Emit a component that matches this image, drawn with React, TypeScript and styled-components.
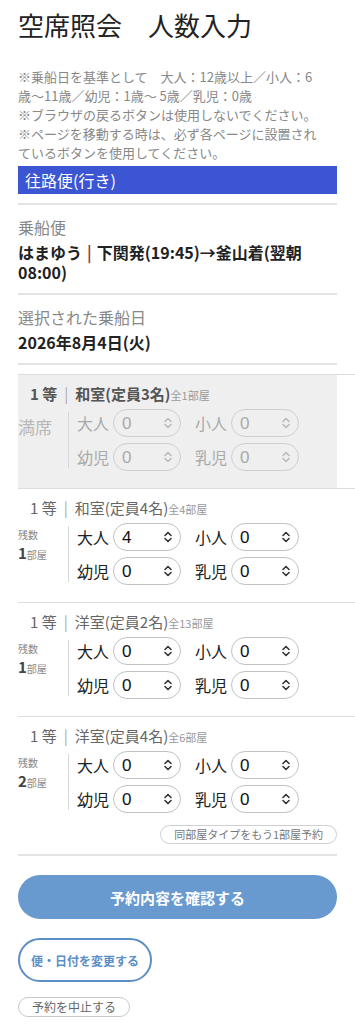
import React from "react";
import styled, { createGlobalStyle } from "styled-components";

const GlobalStyle = createGlobalStyle`
  body {
    margin: 0;
    background: #fff;
    color: #222;
    font-family: "Noto Sans CJK JP", "Liberation Sans", sans-serif;
  }
  * { box-sizing: border-box; }
`;

type RoomType = {
  name: string;
  total: string;
  rest?: number;
  full?: boolean;
  values: number[];
  addButton?: boolean;
};

const rooms: RoomType[] = [
  { name: "和室(定員3名)", total: "全1部屋", full: true, values: [0, 0, 0, 0] },
  { name: "和室(定員4名)", total: "全4部屋", rest: 1, values: [4, 0, 0, 0] },
  { name: "洋室(定員2名)", total: "全13部屋", rest: 1, values: [0, 0, 0, 0] },
  { name: "洋室(定員4名)", total: "全6部屋", rest: 2, values: [0, 0, 0, 0], addButton: true },
];

const fieldNames = ["大人", "小人", "幼児", "乳児"];

export default function App() {
  return (
    <>
      <GlobalStyle />
      <Page>
        <Title>空席照会　人数入力</Title>
        <Notes>
          <NoteLine>※乗船日を基準として　大人：12歳以上／小人：6</NoteLine>
          <NoteLine>歳〜11歳／幼児：1歳〜 5歳／乳児：0歳</NoteLine>
          <NoteLine>※ブラウザの戻るボタンは使用しないでください。</NoteLine>
          <NoteLine>※ページを移動する時は、必ず各ページに設置され</NoteLine>
          <NoteLine>ているボタンを使用してください。</NoteLine>
        </Notes>
        <RouteBar>往路便(行き)</RouteBar>
        <Divider />
        <InfoSection>
          <InfoLabel>乗船便</InfoLabel>
          <InfoValue>
            はまゆう<Pipe>|</Pipe>下関発(19:45)→釜山着(翌朝 08:00)
          </InfoValue>
        </InfoSection>
        <Divider />
        <InfoSection>
          <InfoLabel>選択された乗船日</InfoLabel>
          <InfoValue>2026年8月4日(火)</InfoValue>
        </InfoSection>
        <Divider />

        <RoomList>
          {rooms.map((room, i) => (
            <RoomCard key={i}>
              <CardBody $full={room.full}>
                <RoomHeader $full={room.full}>
                  1 等<HeaderSep>|</HeaderSep>
                  {room.name}
                  <TotalText>{room.total}</TotalText>
                </RoomHeader>
                <RoomMain>
                  <StockCol>
                    {room.full ? (
                      <FullText>満席</FullText>
                    ) : (
                      <>
                        <StockSmall>残数</StockSmall>
                        <StockLine>
                          <StockNum>{room.rest}</StockNum>
                          <StockSmall>部屋</StockSmall>
                        </StockLine>
                      </>
                    )}
                  </StockCol>
                  <FieldGrid>
                    {fieldNames.map((f, j) => (
                      <Field key={f}>
                        <FieldLabel $disabled={room.full}>{f}</FieldLabel>
                        <SelectWrap>
                          <CountSelect
                            $disabled={room.full}
                            disabled={room.full}
                            defaultValue={room.values[j]}
                          >
                            {[0, 1, 2, 3, 4].map((n) => (
                              <option key={n} value={n}>
                                {n}
                              </option>
                            ))}
                          </CountSelect>
                          <Chevron $disabled={room.full} width="8" height="12" viewBox="0 0 8 12">
                            <path d="M1 4.5 L4 1.5 L7 4.5 M1 7.5 L4 10.5 L7 7.5" />
                          </Chevron>
                        </SelectWrap>
                      </Field>
                    ))}
                  </FieldGrid>
                </RoomMain>
                {room.addButton && (
                  <AddRow>
                    <AddButton>同部屋タイプをもう1部屋予約</AddButton>
                  </AddRow>
                )}
              </CardBody>
            </RoomCard>
          ))}
        </RoomList>
        <Divider $gap={0} />

        <ConfirmButton>予約内容を確認する</ConfirmButton>
        <ChangeButton>便・日付を変更する</ChangeButton>
        <CancelButton>予約を中止する</CancelButton>
      </Page>
    </>
  );
}

const Page = styled.div`
  padding: 0 18px 20px;
  width: 355px;
  overflow: hidden;
`;

const Title = styled.h1`
  margin: 9px 0 0;
  font-size: 26px;
  line-height: 31px;
  font-weight: normal;
  color: #222;
`;

const Notes = styled.div`
  margin-top: 27px;
  font-size: 13px;
  line-height: 19px;
  color: #888;
`;

const NoteLine = styled.div`
  white-space: nowrap;
`;

const RouteBar = styled.div`
  margin-top: 4px;
  height: 28px;
  line-height: 28px;
  padding-left: 7px;
  background: #3b55d3;
  color: #fff;
  font-size: 16px;
`;

const Divider = styled.div<{ $gap?: number }>`
  margin-top: ${(p) => (p.$gap ?? 9)}px;
  height: 2px;
  background: #e4e4e4;
`;

const InfoSection = styled.div`
  padding: 11px 0 2px;
`;

const InfoLabel = styled.div`
  font-size: 16px;
  line-height: 22px;
  color: #888;
`;

const InfoValue = styled.div`
  margin-top: 4px;
  font-size: 16px;
  line-height: 20px;
  font-weight: bold;
  color: #222;
`;

const Pipe = styled.span`
  margin: 0 5px;
  color: #9b3b3b;
`;

const RoomList = styled.div`
  margin: 9px -18px 0 0;
`;

const RoomCard = styled.div`
  border-top: 1px solid #dcdcdc;
`;

const CardBody = styled.div<{ $full?: boolean }>`
  width: 319px;
  padding: 10px 0 17px;
  background: ${(p) => (p.$full ? "#efefef" : "#fff")};
`;

const RoomHeader = styled.div<{ $full?: boolean }>`
  padding-left: 12px;
  font-size: 15px;
  line-height: 18px;
  height: 18px;
  white-space: nowrap;
  color: ${(p) => (p.$full ? "#555" : "#666")};
  font-weight: ${(p) => (p.$full ? "bold" : "normal")};
`;

const HeaderSep = styled.span`
  margin: 0 7px;
  color: #aaa;
  font-weight: normal;
`;

const TotalText = styled.span`
  font-size: 11px;
  color: #999;
  font-weight: normal;
`;

const RoomMain = styled.div`
  display: flex;
  margin-top: 6px;
`;

const StockCol = styled.div`
  width: 51px;
  margin: 3px 0;
  border-right: 1px solid #d8d8d8;
  display: flex;
  flex-direction: column;
`;

const FullText = styled.div`
  margin-top: 3px;
  font-size: 17px;
  line-height: 24px;
  color: #b8b8b8;
`;

const StockSmall = styled.span`
  font-size: 10px;
  line-height: 18px;
  color: #888;
`;

const StockLine = styled.div`
  display: flex;
  align-items: baseline;
  height: 18px;
`;

const StockNum = styled.span`
  font-size: 15px;
  line-height: 18px;
  font-weight: bold;
  color: #444;
`;

const FieldGrid = styled.div`
  display: grid;
  grid-template-columns: 104px 104px;
  grid-auto-rows: 28px;
  column-gap: 14px;
  row-gap: 6px;
  padding-left: 8px;
`;

const Field = styled.div`
  display: flex;
  align-items: center;
  gap: 4px;
`;

const FieldLabel = styled.span<{ $disabled?: boolean }>`
  font-size: 16px;
  width: 32px;
  white-space: nowrap;
  color: ${(p) => (p.$disabled ? "#aaa" : "#222")};
`;

const SelectWrap = styled.div`
  position: relative;
  width: 68px;
  height: 28px;
`;

const CountSelect = styled.select<{ $disabled?: boolean }>`
  appearance: none;
  -webkit-appearance: none;
  display: block;
  width: 100%;
  height: 100%;
  margin: 0;
  padding: 0 0 0 8px;
  border-radius: 14px;
  border: 1.5px solid ${(p) => (p.$disabled ? "#cfcfcf" : "#c2c2c2")};
  background: ${(p) => (p.$disabled ? "transparent" : "#fff")};
  color: ${(p) => (p.$disabled ? "#aaa" : "#111")};
  font-family: "Liberation Sans", sans-serif;
  font-size: 17px;
  opacity: 1;
  outline: none;
`;

const Chevron = styled.svg<{ $disabled?: boolean }>`
  position: absolute;
  right: 9px;
  top: 8px;
  pointer-events: none;
  fill: none;
  stroke: ${(p) => (p.$disabled ? "#bbb" : "#333")};
  stroke-width: 1.6;
  stroke-linecap: round;
  stroke-linejoin: round;
`;

const AddRow = styled.div`
  display: flex;
  justify-content: flex-end;
  margin-top: 12px;
  margin-bottom: -7px;
`;

const AddButton = styled.button`
  height: 19px;
  padding: 0 13px;
  border: 1px solid #cfcfcf;
  border-radius: 10px;
  background: #fff;
  color: #777;
  font-family: "Noto Sans CJK JP", "Liberation Sans", sans-serif;
  font-size: 11px;
  line-height: 17px;
`;

const ConfirmButton = styled.button`
  display: block;
  width: 100%;
  height: 44px;
  margin-top: 19px;
  border: none;
  border-radius: 22px;
  background: #6899cf;
  color: #fff;
  font-family: "Noto Sans CJK JP", "Liberation Sans", sans-serif;
  font-size: 15px;
  font-weight: bold;
`;

const ChangeButton = styled.button`
  display: block;
  height: 44px;
  margin-top: 19px;
  padding: 0 11px;
  border: 2px solid #5b8ec8;
  border-radius: 22px;
  background: #fff;
  color: #5b8ec8;
  font-family: "Noto Sans CJK JP", "Liberation Sans", sans-serif;
  font-size: 12px;
  font-weight: bold;
`;

const CancelButton = styled.button`
  display: block;
  height: 20px;
  margin-top: 15px;
  padding: 0 13px;
  border: 1px solid #c8c8c8;
  border-radius: 10px;
  background: #fff;
  color: #666;
  font-family: "Noto Sans CJK JP", "Liberation Sans", sans-serif;
  font-size: 12px;
  line-height: 18px;
`;
